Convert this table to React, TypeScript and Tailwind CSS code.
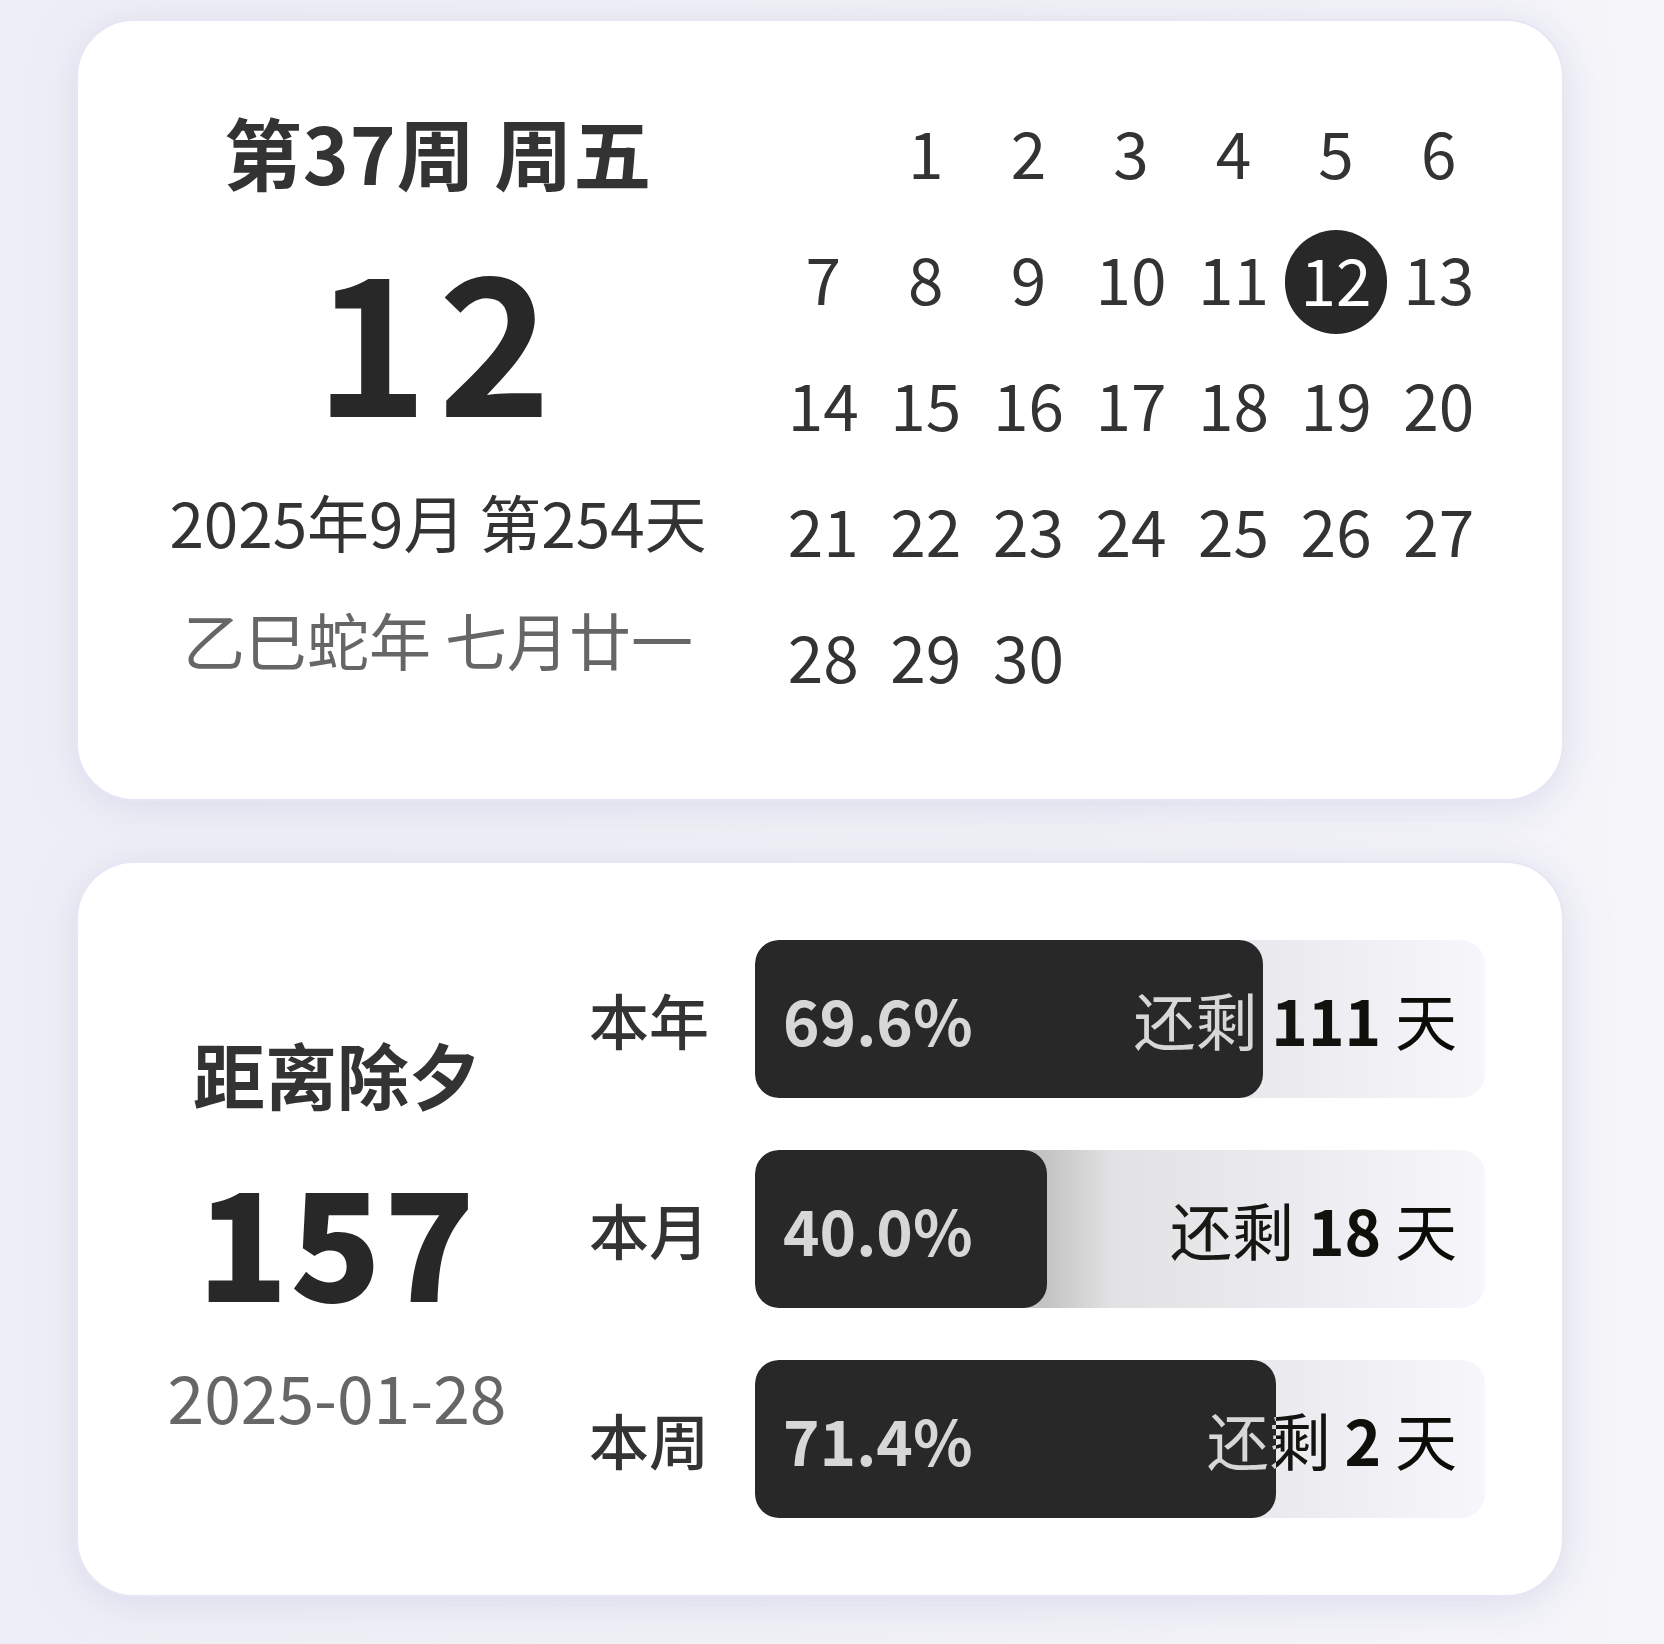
import React from 'react';

const FONT = "font-['Noto_Sans_CJK_SC','Noto_Sans',sans-serif]";

// September 2025, week starts on Sunday
const leading = 1;
const daysInMonth = 30;
const today = 12;

interface Progress {
  label: string;
  percent: number;
  remain: number;
}

const progress: Progress[] = [
  { label: '本年', percent: 69.6, remain: 111 },
  { label: '本月', percent: 40.0, remain: 18 },
  { label: '本周', percent: 71.4, remain: 2 },
];

function CalendarCard() {
  const cells: (number | null)[] = [];
  for (let i = 0; i < leading; i++) cells.push(null);
  for (let d = 1; d <= daysInMonth; d++) cells.push(d);

  return (
    <div className="flex gap-[46px] rounded-[58px] border-2 border-[#e6e6f4] bg-white pl-[72px] pr-[72px] pt-[72px] pb-[76px] shadow-[0_6px_40px_rgba(200,200,228,0.55)]">
      {/* Left: today summary */}
      <div className="w-[576px] self-start mt-[8px] flex flex-col items-center text-[#333]">
        <div className="h-[100px] leading-[100px] text-[78px] font-bold tracking-[1px]">第37周 周五</div>
        <div className="mt-[42px] h-[180px] leading-[180px] text-[192px] font-bold tracking-[10px] text-[#282828]">12</div>
        <div className="mt-[58px] h-[80px] leading-[80px] text-[62px]">2025年9月 第254天</div>
        <div className="mt-[38px] h-[80px] leading-[80px] text-[62px] text-[#666]">乙巳蛇年 七月廿一</div>
      </div>

      {/* Right: month grid */}
      <div className="w-[718px] grid grid-cols-7">
        {cells.map((d, i) => (
          <div key={i} className="h-[126px] flex items-center justify-center">
            {d !== null && (
              <span
                className={`flex items-center justify-center leading-none text-[64px] ${
                  d === today
                    ? 'w-[102px] h-[104px] pb-[8px] rounded-full bg-[#282828] text-white'
                    : 'mb-[10px] text-[#333]'
                }`}
              >
                {d}
              </span>
            )}
          </div>
        ))}
      </div>
    </div>
  );
}

function CountdownCard() {
  return (
    <div className="flex items-center gap-[52px] rounded-[58px] border-2 border-[#e6e6f4] bg-white pl-[59px] pr-[77px] py-[77px] shadow-[0_6px_40px_rgba(200,200,228,0.55)]">
      {/* Left: spring festival countdown */}
      <div className="w-[400px] flex flex-col items-center">
        <div className="h-[90px] leading-[90px] text-[72px] font-bold text-[#333]">距离除夕</div>
        <div className="mt-[44px] h-[150px] leading-[150px] text-[150px] font-black tracking-[2px] text-[#282828]">157</div>
        <div className="mt-[48px] h-[70px] leading-[70px] text-[66px] text-[#666]">2025-01-28</div>
      </div>

      {/* Right: progress bars */}
      <div className="flex-1 flex flex-col gap-[52px]">
        {progress.map((p) => (
          <div key={p.label} className="flex items-center gap-[46px]">
            <div className="w-[120px] text-[60px] font-medium leading-none text-[#333]">{p.label}</div>
            <div className="relative isolate flex-1 h-[158px] rounded-[24px] overflow-hidden bg-[linear-gradient(90deg,#b4b4b4_0%,#c4c4c4_40%,#e2e2e4_49%,#eaeaee_70%,#f6f6fb_100%)]">
              <div
                className="absolute inset-y-0 left-0 rounded-[24px] bg-[#282828]"
                style={{ width: `${p.percent}%` }}
              />
              <div className="relative h-full flex items-center justify-between px-[28px] text-white mix-blend-difference">
                <span className="text-[62px] font-bold leading-none">{p.percent.toFixed(1)}%</span>
                <span className="text-[62px] leading-none">
                  还剩 <b className="font-bold">{p.remain}</b> 天
                </span>
              </div>
            </div>
          </div>
        ))}
      </div>
    </div>
  );
}

export default function App() {
  return (
    <div className={`${FONT} min-h-[1644px] bg-[linear-gradient(90deg,#eeeff6_0%,#f1f1f7_60%,#f5f5fa_100%)] pl-[76px] pr-[100px] pt-[19px] pb-[48px] flex flex-col gap-[60px]`}>
      <CalendarCard />
      <CountdownCard />
    </div>
  );
}
